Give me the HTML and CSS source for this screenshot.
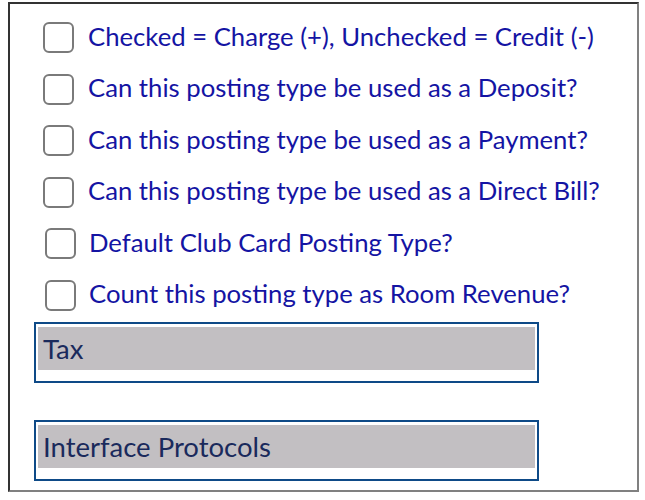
FILE: index.html
```html
<!DOCTYPE html>
<html>
<head>
<meta charset="utf-8">
<link rel="stylesheet" href="styles.css">
</head>
<body>
<div class="frame">
  <div class="options">
    <label class="opt"><span class="box"></span><span class="txt">Checked = Charge (+), Unchecked = Credit (-)</span></label>
    <label class="opt"><span class="box"></span><span class="txt">Can this posting type be used as a Deposit?</span></label>
    <label class="opt"><span class="box"></span><span class="txt">Can this posting type be used as a Payment?</span></label>
    <label class="opt"><span class="box"></span><span class="txt">Can this posting type be used as a Direct Bill?</span></label>
    <label class="opt shift"><span class="box"></span><span class="txt">Default Club Card Posting Type?</span></label>
    <label class="opt shift"><span class="box"></span><span class="txt">Count this posting type as Room Revenue?</span></label>
  </div>
  <div class="panel first"><div class="panel-head">Tax</div></div>
  <div class="panel second"><div class="panel-head">Interface Protocols</div></div>
</div>
</body>
</html>
```
FILE: styles.css
```css
html, body { margin: 0; padding: 0; background: #fff; }
body { font-family: Lato, "Open Sans", sans-serif; }
.frame {
  box-sizing: border-box;
  margin: 2px 6px 0 8px;
  width: 631px;
  height: 490px;
  border: 2px solid;
  border-color: #333 #808080 #808080 #333;
  padding: 16px 0 0 0;
}
.options { display: flex; flex-direction: column; padding-left: 33px; }
.opt {
  display: flex;
  height: 51.6px;
  align-items: flex-start;
}
.box {
  box-sizing: border-box;
  width: 31px;
  height: 31px;
  border: 2.5px solid #7a7a7a;
  border-radius: 6px;
  margin-top: 2px;
  flex: none;
}
.txt {
  margin-left: 14px;
  font-size: 25.7px;
  line-height: 35px;
  margin-top: -1.5px;
  color: #1414a3;
  white-space: nowrap;
}
.shift .box { margin-left: 2px; }
.shift .txt { margin-left: 13px; }
.panel {
  box-sizing: border-box;
  width: 505px;
  height: 61px;
  margin-left: 24px;
  border: 2px solid #0e4a87;
  padding: 3px 2px 0 2px;
}
.panel.first { margin-top: -7.6px; }
.panel.second { margin-top: 37px; }
.panel-head {
  background: #c2bfc2;
  height: 43px;
  padding-left: 5px;
  font-size: 27.5px;
  line-height: 43px;
  color: #1a2a5c;
}
```
